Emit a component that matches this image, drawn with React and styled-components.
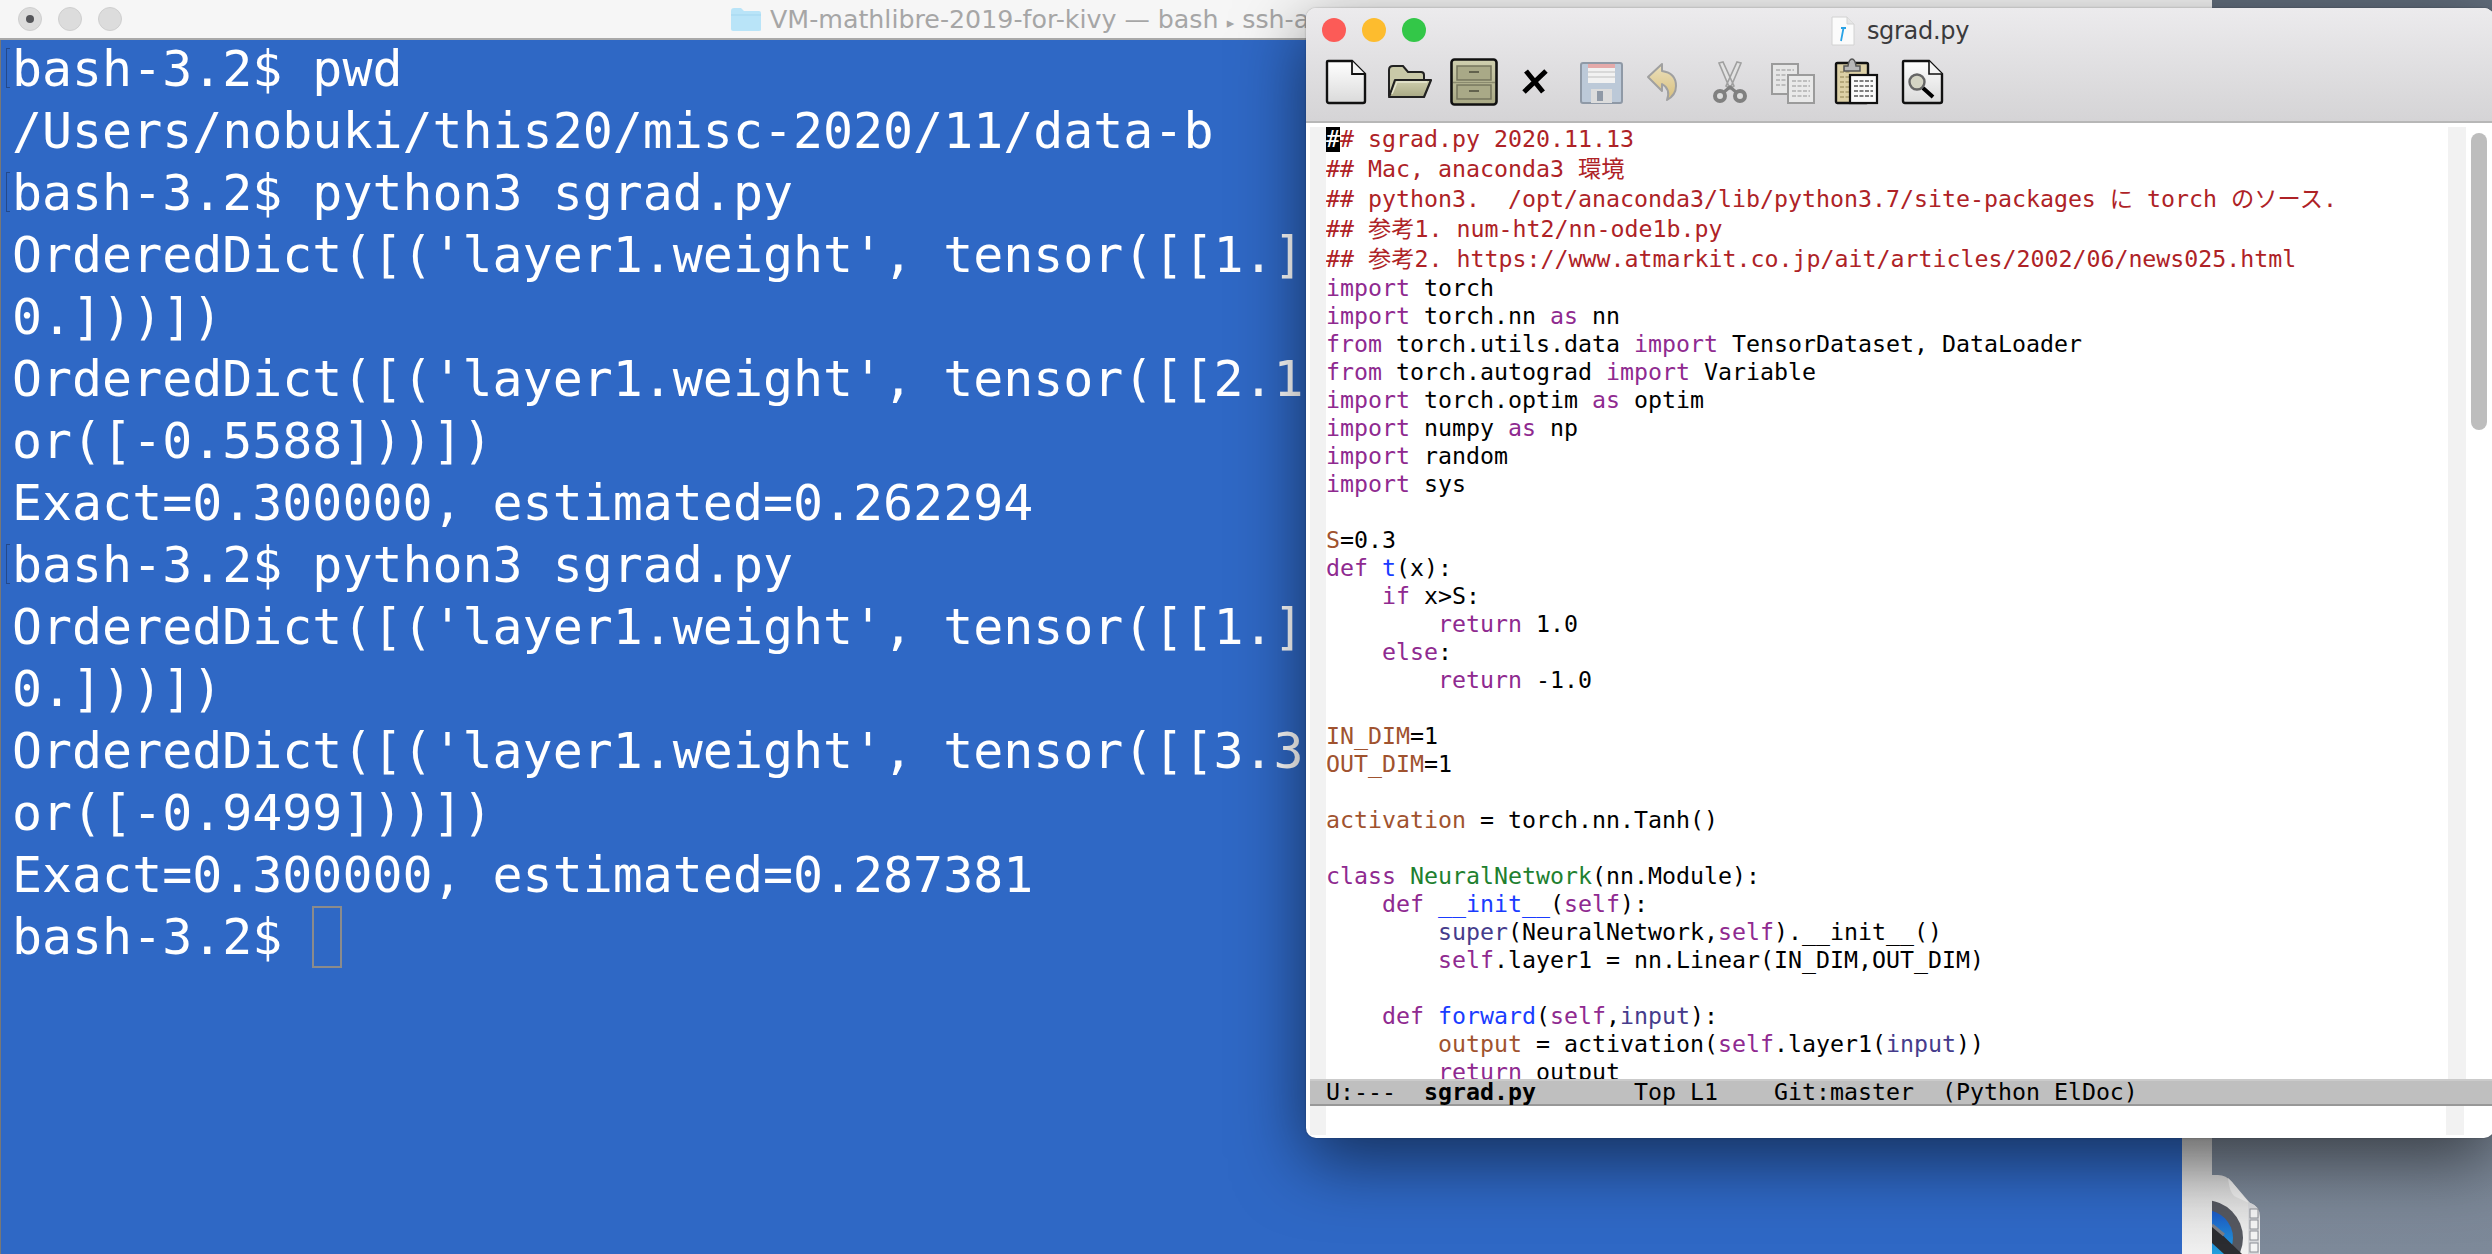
import React from 'react';
import styled, { createGlobalStyle } from 'styled-components';

const Global = createGlobalStyle`
  html, body { margin: 0; padding: 0; width: 2492px; height: 1254px; overflow: hidden; }
  #root { width: 2492px; height: 1254px; }
`;

const Desktop = styled.div`
  position: relative;
  width: 2492px;
  height: 1254px;
  overflow: hidden;
  background: linear-gradient(180deg, #616d7c 0%, #7d8999 100%);
`;

const DesktopIcon = styled.svg`
  position: absolute;
  left: 2212px;
  top: 1173px;
  width: 50px;
  height: 81px;
`;

const TerminalWindow = styled.section`
  position: absolute;
  left: 0;
  top: 0;
  width: 2212px;
  height: 1254px;
  display: flex;
  flex-direction: column;
  overflow: hidden;
`;

const TerminalTitleBar = styled.header`
  height: 38px;
  flex: none;
  display: flex;
  align-items: center;
  background: #f6f6f6;
  border-bottom: 2px solid #a9a9a9;
  padding-left: 18px;
`;

const TerminalLights = styled.div`
  display: flex;
  gap: 16px;
`;

const GreyLight = styled.span`
  width: 24px;
  height: 24px;
  border-radius: 50%;
  background: #dcdcdc;
  border: 1px solid #cfcfcf;
  box-sizing: border-box;
  display: flex;
  align-items: center;
  justify-content: center;
  &::after {
    content: '';
    display: ${p => (p.$dot ? 'block' : 'none')};
    width: 8px;
    height: 8px;
    border-radius: 50%;
    background: #55565a;
  }
`;

const TerminalTitle = styled.div`
  margin-left: 608px;
  display: flex;
  align-items: center;
  gap: 8px;
  font: 25.3px "DejaVu Sans", sans-serif;
  color: #a6a6a6;
  white-space: pre;
`;

const Caret = styled.span`
  font-size: 15px;
`;

const TerminalMain = styled.div`
  flex: 1;
  display: flex;
  min-height: 0;
`;

const TerminalScreen = styled.pre`
  flex: 1;
  margin: 0;
  padding: 0 0 0 11px;
  background: #2f68c5;
  border-left: 1px solid #777;
  color: #fff;
  font: 49.9px/62px "DejaVu Sans Mono", monospace;
`;

const TerminalLines = styled.div`
  margin-top: -2px;
`;

const TermLine = styled.div`
  position: relative;
  height: 62px;
  white-space: pre;
  ${p => p.$mark && `
    &::before {
      content: '';
      position: absolute;
      left: -6px;
      top: 10px;
      width: 3px;
      height: 38px;
      border: 1px solid #23498c;
      border-right: none;
    }
  `}
`;

const TermCursor = styled.span`
  display: inline-block;
  width: 30px;
  height: 62px;
  box-sizing: border-box;
  border: 2px solid #8b8b8b;
  vertical-align: top;
`;

const TerminalScrollStrip = styled.div`
  width: 30px;
  flex: none;
  background: linear-gradient(180deg, #cfcfcf 0%, #c4c4c4 88%, #f0f0f0 100%);
`;

const EditorWindow = styled.section`
  position: absolute;
  left: 1306px;
  top: 8px;
  width: 1188px;
  height: 1130px;
  display: flex;
  flex-direction: column;
  border-radius: 10px;
  overflow: hidden;
  background: #fff;
  box-shadow: 0 22px 70px rgba(0, 0, 0, 0.55), 0 0 2px rgba(0, 0, 0, 0.3);
`;

const EditorHead = styled.header`
  flex: none;
  height: 113px;
  background: linear-gradient(180deg, #ecebed 0%, #d5d4d6 100%);
  border-bottom: 2px solid #b7b7b7;
  box-sizing: content-box;
`;

const EditorTitleBar = styled.div`
  height: 44px;
  display: grid;
  grid-template-columns: 1fr auto 1fr;
  align-items: center;
`;

const Lights = styled.div`
  display: flex;
  gap: 16px;
  padding-left: 16px;
`;

const Light = styled.span`
  width: 24px;
  height: 24px;
  border-radius: 50%;
  background: ${p => p.$c};
`;

const EditorTitle = styled.div`
  display: flex;
  align-items: center;
  gap: 12px;
  font: 24px "DejaVu Sans", sans-serif;
  color: #3a3a3c;
  letter-spacing: -0.3px;
  margin-top: 1px;
`;

const Toolbar = styled.div`
  height: 48px;
  margin-top: 6px;
  padding-left: 8px;
  display: flex;
`;

const Tool = styled.div`
  width: 64px;
  height: 48px;
  flex: none;
  display: flex;
  justify-content: center;
  svg { display: block; width: 48px; height: 48px; overflow: visible; }
`;

const EditorBody = styled.div`
  flex: 1;
  min-height: 0;
  display: flex;
  flex-direction: column;
  padding: 4px 0 3px 4px;
`;

const CodeRow = styled.div`
  height: 952px;
  flex: none;
  display: flex;
  overflow: hidden;
`;

const Fringe = styled.div`
  width: ${p => p.$w || 16}px;
  flex: none;
  background: #f2f2f2;
`;

const Code = styled.div`
  flex: 1;
  min-width: 0;
  margin-top: -3px;
  overflow: hidden;
  font: 23.25px/28px "DejaVu Sans Mono", "Noto Sans CJK JP", monospace;
  color: #000;
`;

const CodeLine = styled.div`
  height: ${p => (p.$tall ? 30 : 28)}px;
  line-height: ${p => (p.$tall ? 30 : 28)}px;
  white-space: pre;
`;

const Token = styled.span`
  color: ${p => p.$c};
`;

const Point = styled.span`
  background: #000;
  color: #fff;
`;

const Scrollbar = styled.div`
  width: 28px;
  flex: none;
  padding: 6px 0 0 5px;
  box-sizing: border-box;
`;

const Thumb = styled.div`
  width: 16px;
  height: 297px;
  border-radius: 8px;
  background: #bdbdbd;
`;

const ModeLine = styled.div`
  flex: none;
  height: 27px;
  box-sizing: border-box;
  background: #bfbfbf;
  border-top: 2px solid #cbcbcb;
  border-bottom: 2px solid #989898;
  padding-left: 16px;
  font: 23.25px/22px "DejaVu Sans Mono", monospace;
  color: #000;
  white-space: pre;
`;

const BufferName = styled.b`
  font-weight: 700;
`;

const MiniRow = styled.div`
  flex: 1;
  display: flex;
  justify-content: space-between;
  padding-right: 30px;
`;

const CMT = '#ae2226';
const KW = '#8f2a90';
const VAR = '#a0532f';
const FN = '#1a3cff';
const BI = '#453c8c';
const TYPE = '#21802f';

const C = (text) => [CMT, text];
const K = (text) => [KW, text];
const V = (text) => [VAR, text];
const F = (text) => [FN, text];
const B = (text) => [BI, text];

const codeLines = [
  [C('## Mac, anaconda3 環境')],
  [C('## python3.  /opt/anaconda3/lib/python3.7/site-packages に torch のソース.')],
  [C('## 参考1. num-ht2/nn-ode1b.py')],
  [C('## 参考2. https://www.atmarkit.co.jp/ait/articles/2002/06/news025.html')],
];

const plainLines = [
  [K('import'), ' torch'],
  [K('import'), ' torch.nn ', K('as'), ' nn'],
  [K('from'), ' torch.utils.data ', K('import'), ' TensorDataset, DataLoader'],
  [K('from'), ' torch.autograd ', K('import'), ' Variable'],
  [K('import'), ' torch.optim ', K('as'), ' optim'],
  [K('import'), ' numpy ', K('as'), ' np'],
  [K('import'), ' random'],
  [K('import'), ' sys'],
  [],
  [V('S'), '=0.3'],
  [K('def'), ' ', F('t'), '(x):'],
  ['    ', K('if'), ' x>S:'],
  ['        ', K('return'), ' 1.0'],
  ['    ', K('else'), ':'],
  ['        ', K('return'), ' -1.0'],
  [],
  [V('IN_DIM'), '=1'],
  [V('OUT_DIM'), '=1'],
  [],
  [V('activation'), ' = torch.nn.Tanh()'],
  [],
  [K('class'), ' ', [TYPE, 'NeuralNetwork'], '(nn.Module):'],
  ['    ', K('def'), ' ', F('__init__'), '(', K('self'), '):'],
  ['        ', B('super'), '(NeuralNetwork,', K('self'), ').__init__()'],
  ['        ', K('self'), '.layer1 = nn.Linear(IN_DIM,OUT_DIM)'],
  [],
  ['    ', K('def'), ' ', F('forward'), '(', K('self'), ',', B('input'), '):'],
  ['        ', V('output'), ' = activation(', K('self'), '.layer1(', B('input'), '))'],
  ['        ', K('return'), ' output'],
];

const renderTokens = (tokens) =>
  tokens.map((t, i) =>
    Array.isArray(t) ? <Token key={i} $c={t[0]}>{t[1]}</Token> : <React.Fragment key={i}>{t}</React.Fragment>
  );

const termLines = [
  ['bash-3.2$ pwd', true],
  ['/Users/nobuki/this20/misc-2020/11/data-b'],
  ['bash-3.2$ python3 sgrad.py', true],
  ["OrderedDict([('layer1.weight', tensor([[1.]"],
  ['0.]))])'],
  ["OrderedDict([('layer1.weight', tensor([[2.1"],
  ['or([-0.5588]))])'],
  ['Exact=0.300000, estimated=0.262294'],
  ['bash-3.2$ python3 sgrad.py', true],
  ["OrderedDict([('layer1.weight', tensor([[1.]"],
  ['0.]))])'],
  ["OrderedDict([('layer1.weight', tensor([[3.3"],
  ['or([-0.9499]))])'],
  ['Exact=0.300000, estimated=0.287381'],
];

const FolderGlyph = () => (
  <svg width="32" height="25" viewBox="0 0 32 25">
    <path d="M1 4 Q1 1 4 1 H11 L14 4 H29 Q31 4 31 6 V23 Q31 24 29 24 H3 Q1 24 1 22 Z" fill="#b9e4f8" />
    <path d="M1 8 H31" stroke="#a3d6ef" strokeWidth="1" />
  </svg>
);

const FileGlyph = () => (
  <svg width="24" height="30" viewBox="0 0 24 30">
    <path d="M1 1 H16 L23 8 V29 H1 Z" fill="#fbfbfb" stroke="#d2d2d2" />
    <path d="M16 1 V8 H23" fill="#e6e6e6" stroke="#d2d2d2" />
    <path d="M10 12 H15 M12.5 12 L10 25" stroke="#2aa3e6" strokeWidth="1.8" fill="none" />
  </svg>
);

const Defs = () => (
  <svg width="0" height="0" style={{ position: 'absolute' }}>
    <defs>
      <linearGradient id="paper" x1="0" y1="0" x2="0" y2="1">
        <stop offset="0" stopColor="#ffffff" />
        <stop offset="1" stopColor="#dadada" />
      </linearGradient>
      <linearGradient id="khaki" x1="0" y1="0" x2="0" y2="1">
        <stop offset="0" stopColor="#cfcfae" />
        <stop offset="1" stopColor="#a9a985" />
      </linearGradient>
      <linearGradient id="gold" x1="0" y1="0" x2="0" y2="1">
        <stop offset="0" stopColor="#ebe0bd" />
        <stop offset="1" stopColor="#d8bf7c" />
      </linearGradient>
      <linearGradient id="qtpaper" x1="0" y1="0" x2="0" y2="1">
        <stop offset="0" stopColor="#d8d8d8" />
        <stop offset="1" stopColor="#f2f2f2" />
      </linearGradient>
      <linearGradient id="qtblue" x1="0" y1="0" x2="0" y2="1">
        <stop offset="0" stopColor="#1c56c4" />
        <stop offset="1" stopColor="#24b5e4" />
      </linearGradient>
    </defs>
  </svg>
);

const NewIcon = () => (
  <svg viewBox="0 0 48 48">
    <path d="M6 3 H30 L43 16 V43 Q43 45 41 45 H7 Q5 45 5 43 V4 Q5 3 6 3 Z" fill="url(#paper)" stroke="#111" strokeWidth="2.4" />
    <path d="M30 3 V16 H43" fill="#f4f4f4" stroke="#111" strokeWidth="1.8" />
  </svg>
);

const OpenIcon = () => (
  <svg viewBox="0 0 48 48">
    <path d="M3 38 V12 Q3 8 7 8 H17 L22 14 H35 Q38 14 38 17 V22" fill="#c9c9a8" stroke="#222" strokeWidth="2" />
    <path d="M3 39 L9 22 H45 L38 39 Z" fill="url(#khaki)" stroke="#222" strokeWidth="2.2" strokeLinejoin="round" />
    <path d="M6 36 L11 24 H41" fill="none" stroke="#e6e6cf" strokeWidth="1.4" />
  </svg>
);

const CabinetIcon = () => (
  <svg viewBox="0 0 48 48">
    <rect x="1.5" y="1.5" width="45" height="45" rx="3" fill="url(#khaki)" stroke="#111" strokeWidth="2.6" />
    <rect x="7" y="8" width="34" height="14" fill="#a9a987" stroke="#75755d" strokeWidth="1.5" />
    <rect x="7" y="27" width="34" height="14" fill="#a9a987" stroke="#75755d" strokeWidth="1.5" />
    <path d="M19 14 H29 M19 33 H29" stroke="#62624d" strokeWidth="2" />
    <path d="M3 24.5 H45" stroke="#8a8a6e" strokeWidth="1.5" />
  </svg>
);

const CloseIcon = () => (
  <svg viewBox="0 0 48 48">
    <path d="M12 13 L29 34 M32 13 L10 34" stroke="#000" strokeWidth="5" fill="none" />
  </svg>
);

const SaveIcon = () => (
  <svg viewBox="0 0 48 48">
    <rect x="3" y="5" width="41" height="40" rx="2" fill="#bcc9d8" stroke="#8f99a6" strokeWidth="2" />
    <rect x="10" y="6" width="27" height="19" fill="#f1f1f1" />
    <rect x="10" y="6" width="27" height="4" fill="#e4a9a9" />
    <path d="M10 14 H37 M10 19 H37" stroke="#cfcfcf" strokeWidth="1.4" />
    <rect x="13" y="31" width="21" height="14" fill="#dcdcdc" />
    <rect x="19" y="33" width="6" height="10" fill="#8f99a6" />
  </svg>
);

const UndoIcon = () => (
  <svg viewBox="0 0 48 48">
    <path d="M6 19 L20 6 V13 Q34 15 34 28 Q34 37 25 42 Q29 31 20 26 V33 Z" fill="url(#gold)" stroke="#a0a0a0" strokeWidth="2" strokeLinejoin="round" />
  </svg>
);

const CutIcon = () => (
  <svg viewBox="0 0 48 48">
    <path d="M13 5 L17 4 L28 28 L24 31 Z M35 5 L31 4 L20 28 L24 31 Z" fill="#e2e2e2" stroke="#a0a0a0" strokeWidth="1.6" />
    <circle cx="14" cy="38" r="5" fill="#ddd" stroke="#808080" strokeWidth="4" />
    <circle cx="34" cy="38" r="5" fill="#ddd" stroke="#808080" strokeWidth="4" />
    <path d="M18 34 L24 29 L30 34" stroke="#808080" strokeWidth="3" fill="none" />
  </svg>
);

const rows = (x, y, w, n, step, color) =>
  Array.from({ length: n }, (_, i) => (
    <path key={i} d={`M${x} ${y + i * step} H${x + w}`} stroke={color} strokeWidth="1.5" strokeDasharray="4 1.5" />
  ));

const CopyIcon = () => (
  <svg viewBox="0 0 48 48">
    <rect x="2" y="6" width="26" height="30" fill="#e6e6e6" stroke="#9b9b9b" strokeWidth="2" />
    {rows(6, 12, 18, 4, 5, '#b0b0b0')}
    <rect x="18" y="17" width="26" height="28" fill="#e9e9e9" stroke="#9b9b9b" strokeWidth="2" />
    {rows(22, 23, 18, 4, 5, '#b0b0b0')}
  </svg>
);

const PasteIcon = () => (
  <svg viewBox="0 0 48 48">
    <rect x="2" y="5" width="32" height="40" rx="1.5" fill="#dcd0a6" stroke="#111" strokeWidth="2.4" />
    {rows(6, 14, 10, 6, 5, '#a89b6e')}
    <path d="M10 13 V8 H14 Q15 1 18 1 Q21 1 22 8 H26 V13 Z" fill="#b8b8b8" stroke="#555" strokeWidth="1.5" />
    <rect x="16" y="17" width="27" height="28" fill="#fafafa" stroke="#111" strokeWidth="2.2" />
    {rows(20, 23, 19, 4, 5, '#555')}
  </svg>
);

const SearchIcon = () => (
  <svg viewBox="0 0 48 48">
    <path d="M6 3 H31 L44 16 V43 Q44 45 42 45 H7 Q5 45 5 43 V4 Q5 3 6 3 Z" fill="url(#paper)" stroke="#111" strokeWidth="2.4" />
    <path d="M31 3 V16 H44" fill="#f4f4f4" stroke="#111" strokeWidth="1.6" />
    <circle cx="19" cy="24" r="7.5" fill="#d4d4c4" stroke="#666" strokeWidth="2.4" />
    <path d="M25 30 L35 39" stroke="#000" strokeWidth="4" />
  </svg>
);

const QuickTimeDoc = () => (
  <DesktopIcon viewBox="0 0 50 81">
    <path d="M0 2 H6 Q14 2 20 9 L38 30 Q48 33 48 44 V81 H0 Z" fill="url(#qtpaper)" />
    <path d="M16 5 Q18 22 24 24 L37 30 L20 9 Z" fill="#efefef" />
    <path d="M36 29 Q47 32 47 44 V81 H36 Z" fill="#d9dadd" />
    {[36, 47, 58, 70].map((y) => (
      <rect key={y} x="38" y={y} width="8" height="9" fill="#f4f4f4" stroke="#8d9097" strokeWidth="1" />
    ))}
    <circle cx="-7" cy="65" r="38" fill="#555860" />
    <circle cx="-7" cy="65" r="28" fill="url(#qtblue)" />
    <path d="M0 52 L30 81 H12 L0 70 Z" fill="#2b2c30" />
    <path d="M0 52 L12 62" stroke="#7b7d84" strokeWidth="3" />
  </DesktopIcon>
);

export default function App() {
  return (
    <Desktop>
      <Global />
      <Defs />
      <QuickTimeDoc />
      <TerminalWindow>
        <TerminalTitleBar>
          <TerminalLights>
            <GreyLight $dot />
            <GreyLight />
            <GreyLight />
          </TerminalLights>
          <TerminalTitle>
            <FolderGlyph />
            <span>VM-mathlibre-2019-for-kivy — bash <Caret>▸</Caret> ssh-a</span>
          </TerminalTitle>
        </TerminalTitleBar>
        <TerminalMain>
          <TerminalScreen>
            <TerminalLines>
              {termLines.map(([text, mark], i) => (
                <TermLine key={i} $mark={mark}>{text}</TermLine>
              ))}
              <TermLine>bash-3.2$ <TermCursor /></TermLine>
            </TerminalLines>
          </TerminalScreen>
          <TerminalScrollStrip />
        </TerminalMain>
      </TerminalWindow>
      <EditorWindow>
        <EditorHead>
          <EditorTitleBar>
            <Lights>
              <Light $c="#fc5b57" />
              <Light $c="#fdbc2e" />
              <Light $c="#33c748" />
            </Lights>
            <EditorTitle><FileGlyph />sgrad.py</EditorTitle>
            <span />
          </EditorTitleBar>
          <Toolbar>
            <Tool><NewIcon /></Tool>
            <Tool><OpenIcon /></Tool>
            <Tool><CabinetIcon /></Tool>
            <Tool><CloseIcon /></Tool>
            <Tool><SaveIcon /></Tool>
            <Tool><UndoIcon /></Tool>
            <Tool><CutIcon /></Tool>
            <Tool><CopyIcon /></Tool>
            <Tool><PasteIcon /></Tool>
            <Tool><SearchIcon /></Tool>
          </Toolbar>
        </EditorHead>
        <EditorBody>
          <CodeRow>
            <Fringe />
            <Code>
              <CodeLine $tall><Token $c={CMT}><Point>#</Point># sgrad.py 2020.11.13</Token></CodeLine>
              {codeLines.map((l, i) => <CodeLine key={i} $tall>{renderTokens(l)}</CodeLine>)}
              {plainLines.map((l, i) => <CodeLine key={i}>{renderTokens(l)}</CodeLine>)}
            </Code>
            <Fringe $w={18} />
            <Scrollbar><Thumb /></Scrollbar>
          </CodeRow>
          <ModeLine>U:---  <BufferName>sgrad.py</BufferName>       Top L1    Git:master  (Python ElDoc)</ModeLine>
          <MiniRow>
            <Fringe />
            <Fringe $w={18} />
          </MiniRow>
        </EditorBody>
      </EditorWindow>
    </Desktop>
  );
}
